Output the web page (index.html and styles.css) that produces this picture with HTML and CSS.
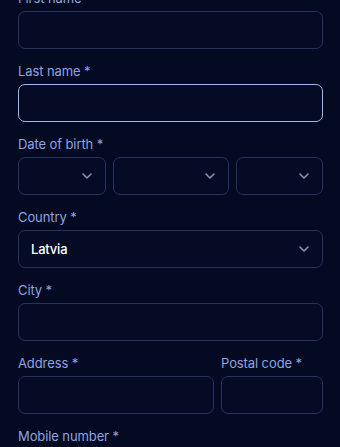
FILE: index.html
```html
<!DOCTYPE html>
<html lang="en">
<head>
<meta charset="utf-8">
<link rel="stylesheet" href="styles.css">
</head>
<body>
<form class="form">
  <div class="field">
    <label class="label">First name *</label>
    <div class="input"></div>
  </div>
  <div class="field">
    <label class="label">Last name *</label>
    <div class="input focused"></div>
  </div>
  <div class="field">
    <label class="label">Date of birth *</label>
    <div class="dob">
      <div class="input select"><svg class="chev" viewBox="0 0 10 6"><path d="M1 1l4 4 4-4"/></svg></div>
      <div class="input select"><svg class="chev" viewBox="0 0 10 6"><path d="M1 1l4 4 4-4"/></svg></div>
      <div class="input select"><svg class="chev" viewBox="0 0 10 6"><path d="M1 1l4 4 4-4"/></svg></div>
    </div>
  </div>
  <div class="field">
    <label class="label">Country *</label>
    <div class="input select"><span class="value">Latvia</span><svg class="chev" viewBox="0 0 10 6"><path d="M1 1l4 4 4-4"/></svg></div>
  </div>
  <div class="field">
    <label class="label">City *</label>
    <div class="input"></div>
  </div>
  <div class="row">
    <div class="field grow">
      <label class="label">Address *</label>
      <div class="input"></div>
    </div>
    <div class="field postal">
      <label class="label">Postal code *</label>
      <div class="input"></div>
    </div>
  </div>
  <div class="field">
    <label class="label">Mobile number *</label>
    <div class="input"></div>
  </div>
</form>
</body>
</html>
```
FILE: styles.css
```css
html, body {
  margin: 0;
  background: #040a21;
}
body {
  font-family: Inter, "Noto Sans", sans-serif;
  overflow: hidden;
  height: 447px;
}
.form {
  padding: 0 17px 0 18px;
  margin-top: -11px;
  display: flex;
  flex-direction: column;
  gap: 13px;
}
.field {
  display: flex;
  flex-direction: column;
  gap: 4px;
}
.label {
  font-size: 13px;
  line-height: 18px;
  color: #8ea4e0;
  letter-spacing: -0.1px;
}
.input {
  height: 38px;
  box-sizing: border-box;
  border: 1px solid #28325c;
  border-radius: 7px;
  background: #050b24;
  display: flex;
  align-items: center;
  padding: 0 12px;
}
.input.focused {
  border-color: #a8b5e6;
}
.select {
  justify-content: space-between;
}
.value {
  color: #ffffff;
  font-size: 13px;
  font-weight: 500;
  letter-spacing: -0.2px;
}
.chev {
  width: 10px;
  height: 6px;
  margin-left: auto;
  margin-right: 1px;
  fill: none;
  stroke: #8790b4;
  stroke-width: 1.6;
  stroke-linecap: round;
  stroke-linejoin: round;
}
.dob {
  display: grid;
  grid-template-columns: 88px 116px 1fr;
  gap: 7px;
}
.row {
  display: flex;
  gap: 7px;
}
.grow {
  flex: 1;
}
.postal {
  width: 102px;
}
```
